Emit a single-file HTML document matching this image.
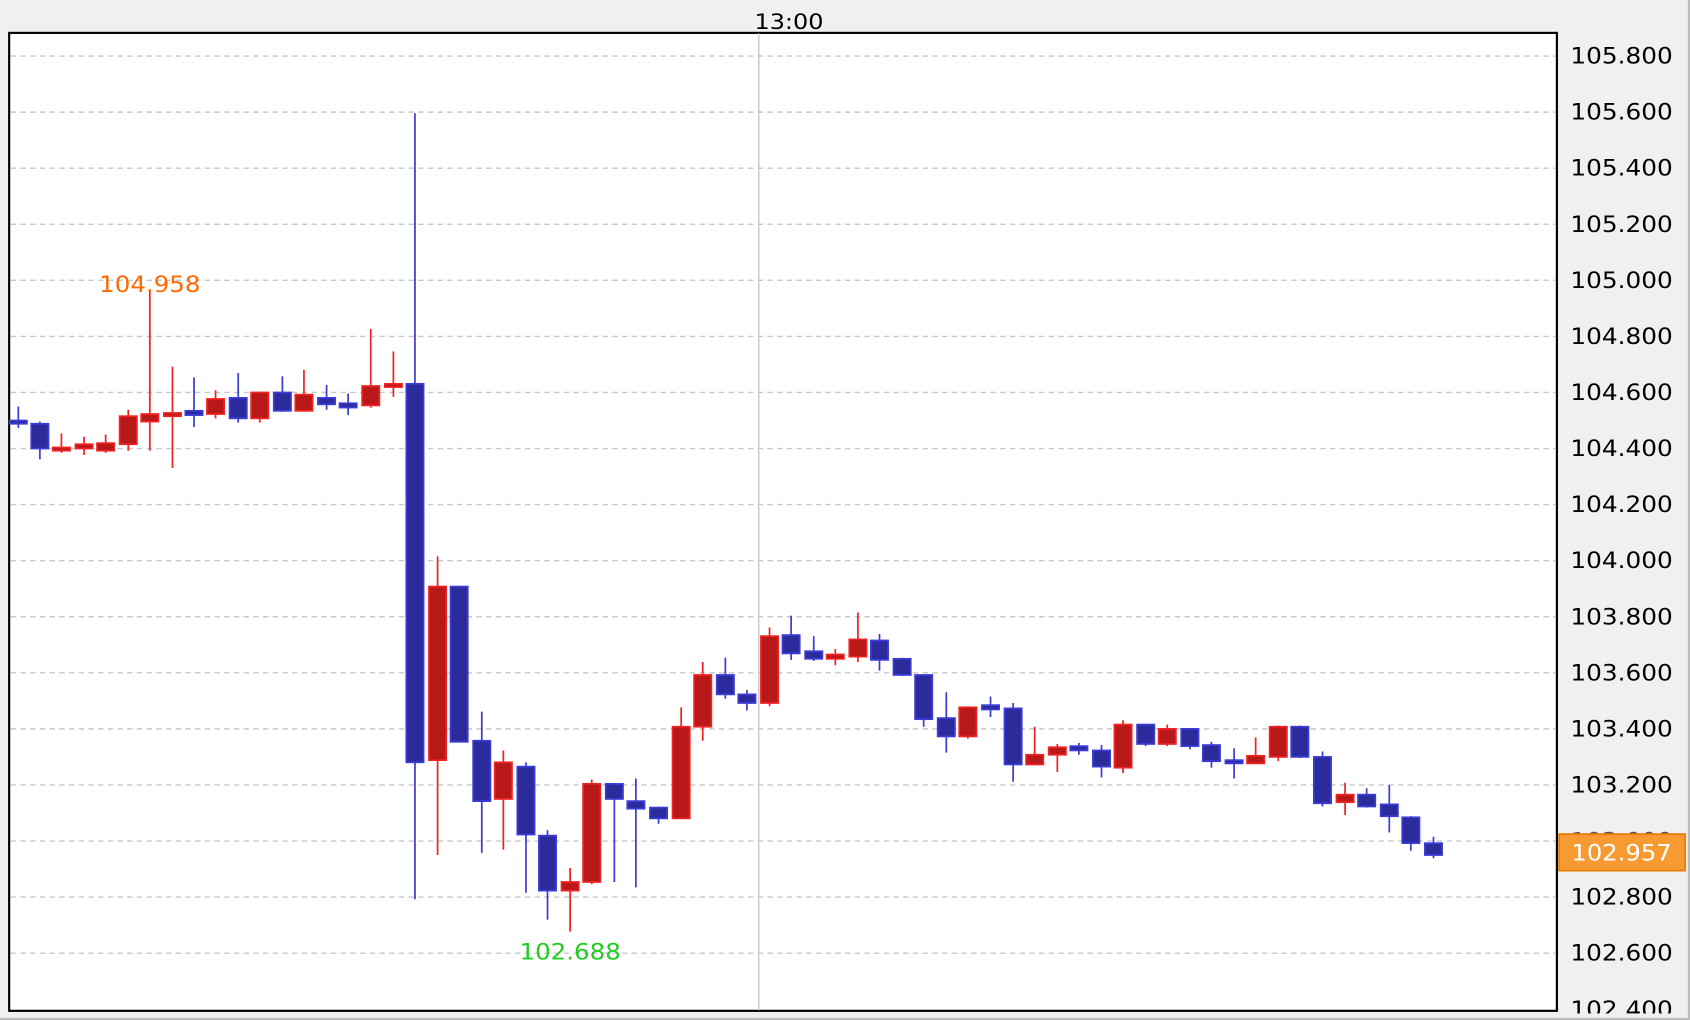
<!DOCTYPE html>
<html><head><meta charset="utf-8"><style>
html,body{margin:0;padding:0;background:#f0f0f0;width:1690px;height:1020px;overflow:hidden}
svg{display:block}
text{font-family:"DejaVu Sans","Liberation Sans",sans-serif}
</style></head><body>
<svg width="1690" height="1020" viewBox="0 0 1568 946" preserveAspectRatio="none" xmlns="http://www.w3.org/2000/svg">
<rect x="0" y="0" width="1568" height="946" fill="#f0f0f0"/>
<rect x="1566" y="0" width="2" height="946" fill="#bdbdbd"/>
<rect x="0" y="944" width="1568" height="2" fill="#bdbdbd"/>
<text x="700" y="27" font-size="20" fill="#000" textLength="64" lengthAdjust="spacingAndGlyphs">13:00</text>
<rect x="8.5" y="30.5" width="1436" height="907" fill="#fff" stroke="#000" stroke-width="2"/>
<g stroke="#c8c8c8" stroke-width="1.3" stroke-dasharray="5,4">
<line x1="10" x2="1443" y1="52" y2="52"/><line x1="10" x2="1443" y1="104" y2="104"/><line x1="10" x2="1443" y1="156" y2="156"/><line x1="10" x2="1443" y1="208" y2="208"/><line x1="10" x2="1443" y1="260" y2="260"/><line x1="10" x2="1443" y1="312" y2="312"/><line x1="10" x2="1443" y1="364" y2="364"/><line x1="10" x2="1443" y1="416" y2="416"/><line x1="10" x2="1443" y1="468" y2="468"/><line x1="10" x2="1443" y1="520" y2="520"/><line x1="10" x2="1443" y1="572" y2="572"/><line x1="10" x2="1443" y1="624" y2="624"/><line x1="10" x2="1443" y1="676" y2="676"/><line x1="10" x2="1443" y1="728" y2="728"/><line x1="10" x2="1443" y1="780" y2="780"/><line x1="10" x2="1443" y1="832" y2="832"/><line x1="10" x2="1443" y1="884" y2="884"/>
</g>
<line x1="704" x2="704" y1="31" y2="937" stroke="#c8c8c8" stroke-width="1.3"/>
<g font-size="21" fill="#000">
<text x="1457" y="59" textLength="95" lengthAdjust="spacingAndGlyphs">105.800</text>
<text x="1457" y="111" textLength="95" lengthAdjust="spacingAndGlyphs">105.600</text>
<text x="1457" y="163" textLength="95" lengthAdjust="spacingAndGlyphs">105.400</text>
<text x="1457" y="215" textLength="95" lengthAdjust="spacingAndGlyphs">105.200</text>
<text x="1457" y="267" textLength="95" lengthAdjust="spacingAndGlyphs">105.000</text>
<text x="1457" y="319" textLength="95" lengthAdjust="spacingAndGlyphs">104.800</text>
<text x="1457" y="371" textLength="95" lengthAdjust="spacingAndGlyphs">104.600</text>
<text x="1457" y="423" textLength="95" lengthAdjust="spacingAndGlyphs">104.400</text>
<text x="1457" y="475" textLength="95" lengthAdjust="spacingAndGlyphs">104.200</text>
<text x="1457" y="527" textLength="95" lengthAdjust="spacingAndGlyphs">104.000</text>
<text x="1457" y="579" textLength="95" lengthAdjust="spacingAndGlyphs">103.800</text>
<text x="1457" y="631" textLength="95" lengthAdjust="spacingAndGlyphs">103.600</text>
<text x="1457" y="683" textLength="95" lengthAdjust="spacingAndGlyphs">103.400</text>
<text x="1457" y="735" textLength="95" lengthAdjust="spacingAndGlyphs">103.200</text>
<text x="1457" y="787" textLength="95" lengthAdjust="spacingAndGlyphs" fill="#555">103.000</text>
<text x="1457" y="839" textLength="95" lengthAdjust="spacingAndGlyphs">102.800</text>
<text x="1457" y="891" textLength="95" lengthAdjust="spacingAndGlyphs">102.600</text>
</g>
<svg x="1446" y="900" width="120" height="40" overflow="hidden"><text x="11" y="43" font-size="21" textLength="95" lengthAdjust="spacingAndGlyphs">102.400</text></svg>
<rect x="1446.5" y="773.5" width="117" height="34" fill="#f89a32" stroke="#e87a00" stroke-width="1.5"/>
<text x="1458" y="798" font-size="21" fill="#fff" textLength="93" lengthAdjust="spacingAndGlyphs">102.957</text>

<g stroke="#3c3cd8" stroke-width="1.6" fill="#2b2b9b">
<line x1="17" x2="17" y1="377" y2="397"/><rect x="9" y="390" width="16" height="3"/>
<line x1="37" x2="37" y1="391" y2="426"/><rect x="29" y="393" width="16" height="23"/>
<line x1="180" x2="180" y1="350" y2="396"/><rect x="172" y="381" width="16" height="4"/>
<line x1="221" x2="221" y1="346" y2="392"/><rect x="213" y="369" width="16" height="19"/>
<line x1="262" x2="262" y1="349" y2="382"/><rect x="254" y="364" width="16" height="17"/>
<line x1="303" x2="303" y1="357" y2="380"/><rect x="295" y="369" width="16" height="6"/>
<line x1="323" x2="323" y1="365" y2="385"/><rect x="315" y="374" width="16" height="4"/>
<line x1="385" x2="385" y1="105" y2="834"/><rect x="377" y="356" width="16" height="351"/>
<rect x="418" y="544" width="16" height="144"/>
<line x1="447" x2="447" y1="660" y2="791"/><rect x="439" y="687" width="16" height="56"/>
<line x1="488" x2="488" y1="707" y2="828"/><rect x="480" y="711" width="16" height="63"/>
<line x1="508" x2="508" y1="770" y2="853"/><rect x="500" y="775" width="16" height="51"/>
<line x1="570" x2="570" y1="727" y2="818"/><rect x="562" y="727" width="16" height="14"/>
<line x1="590" x2="590" y1="722" y2="823"/><rect x="582" y="743" width="16" height="7"/>
<line x1="611" x2="611" y1="748" y2="764"/><rect x="603" y="749" width="16" height="10"/>
<line x1="673" x2="673" y1="610" y2="648"/><rect x="665" y="626" width="16" height="18"/>
<line x1="693" x2="693" y1="640" y2="659"/><rect x="685" y="644" width="16" height="8"/>
<line x1="734" x2="734" y1="571" y2="612"/><rect x="726" y="589" width="16" height="17"/>
<line x1="755" x2="755" y1="590" y2="613"/><rect x="747" y="604" width="16" height="7"/>
<line x1="816" x2="816" y1="588" y2="622"/><rect x="808" y="594" width="16" height="18"/>
<line x1="837" x2="837" y1="610" y2="627"/><rect x="829" y="611" width="16" height="15"/>
<line x1="857" x2="857" y1="626" y2="674"/><rect x="849" y="626" width="16" height="41"/>
<line x1="878" x2="878" y1="642" y2="698"/><rect x="870" y="666" width="16" height="17"/>
<line x1="919" x2="919" y1="646" y2="665"/><rect x="911" y="654" width="16" height="4"/>
<line x1="940" x2="940" y1="652" y2="725"/><rect x="932" y="657" width="16" height="52"/>
<line x1="1001" x2="1001" y1="689" y2="700"/><rect x="993" y="692" width="16" height="4"/>
<line x1="1022" x2="1022" y1="691" y2="721"/><rect x="1014" y="696" width="16" height="15"/>
<line x1="1063" x2="1063" y1="672" y2="692"/><rect x="1055" y="672" width="16" height="18"/>
<line x1="1104" x2="1104" y1="676" y2="695"/><rect x="1096" y="676" width="16" height="16"/>
<line x1="1124" x2="1124" y1="688" y2="712"/><rect x="1116" y="691" width="16" height="15"/>
<line x1="1145" x2="1145" y1="694" y2="722"/><rect x="1137" y="705" width="16" height="3"/>
<line x1="1206" x2="1206" y1="673" y2="703"/><rect x="1198" y="674" width="16" height="28"/>
<line x1="1227" x2="1227" y1="697" y2="748"/><rect x="1219" y="702" width="16" height="43"/>
<line x1="1268" x2="1268" y1="731" y2="749"/><rect x="1260" y="737" width="16" height="11"/>
<line x1="1289" x2="1289" y1="728" y2="772"/><rect x="1281" y="746" width="16" height="11"/>
<line x1="1309" x2="1309" y1="757" y2="789"/><rect x="1301" y="758" width="16" height="24"/>
<line x1="1330" x2="1330" y1="776" y2="796"/><rect x="1322" y="782" width="16" height="11"/>
</g>
<g stroke="#f02222" stroke-width="1.6" fill="#b81818">
<line x1="57" x2="57" y1="402" y2="420"/><rect x="49" y="415" width="16" height="3"/>
<line x1="78" x2="78" y1="405" y2="422"/><rect x="70" y="412" width="16" height="4"/>
<line x1="98" x2="98" y1="403" y2="420"/><rect x="90" y="411" width="16" height="7"/>
<line x1="119" x2="119" y1="380" y2="418"/><rect x="111" y="386" width="16" height="26"/>
<line x1="139" x2="139" y1="270" y2="418"/><rect x="131" y="384" width="16" height="7"/>
<line x1="160" x2="160" y1="340" y2="434"/><rect x="152" y="383" width="16" height="3"/>
<line x1="200" x2="200" y1="362" y2="388"/><rect x="192" y="370" width="16" height="14"/>
<line x1="241" x2="241" y1="364" y2="392"/><rect x="233" y="364" width="16" height="24"/>
<line x1="282" x2="282" y1="343" y2="382"/><rect x="274" y="366" width="16" height="15"/>
<line x1="344" x2="344" y1="305" y2="378"/><rect x="336" y="358" width="16" height="18"/>
<line x1="365" x2="365" y1="326" y2="368"/><rect x="357" y="356" width="16" height="3"/>
<line x1="406" x2="406" y1="516" y2="793"/><rect x="398" y="544" width="16" height="161"/>
<line x1="467" x2="467" y1="696" y2="788"/><rect x="459" y="707" width="16" height="34"/>
<line x1="529" x2="529" y1="805" y2="864"/><rect x="521" y="818" width="16" height="8"/>
<line x1="549" x2="549" y1="723" y2="820"/><rect x="541" y="727" width="16" height="91"/>
<line x1="632" x2="632" y1="656" y2="759"/><rect x="624" y="674" width="16" height="85"/>
<line x1="652" x2="652" y1="614" y2="687"/><rect x="644" y="626" width="16" height="48"/>
<line x1="714" x2="714" y1="582" y2="655"/><rect x="706" y="590" width="16" height="62"/>
<line x1="775" x2="775" y1="602" y2="617"/><rect x="767" y="607" width="16" height="4"/>
<line x1="796" x2="796" y1="568" y2="614"/><rect x="788" y="593" width="16" height="16"/>
<line x1="898" x2="898" y1="655" y2="685"/><rect x="890" y="656" width="16" height="27"/>
<line x1="960" x2="960" y1="674" y2="710"/><rect x="952" y="700" width="16" height="9"/>
<line x1="981" x2="981" y1="690" y2="716"/><rect x="973" y="693" width="16" height="7"/>
<line x1="1042" x2="1042" y1="668" y2="717"/><rect x="1034" y="672" width="16" height="40"/>
<line x1="1083" x2="1083" y1="672" y2="692"/><rect x="1075" y="676" width="16" height="14"/>
<line x1="1165" x2="1165" y1="684" y2="708"/><rect x="1157" y="701" width="16" height="7"/>
<line x1="1186" x2="1186" y1="673" y2="706"/><rect x="1178" y="674" width="16" height="28"/>
<line x1="1248" x2="1248" y1="726" y2="756"/><rect x="1240" y="737" width="16" height="7"/>
</g>
<text x="92" y="271" font-size="21" fill="#ff6a00" textLength="94" lengthAdjust="spacingAndGlyphs">104.958</text>
<text x="482" y="890" font-size="21" fill="#22cc22" textLength="94" lengthAdjust="spacingAndGlyphs">102.688</text>
</svg>
</body></html>
